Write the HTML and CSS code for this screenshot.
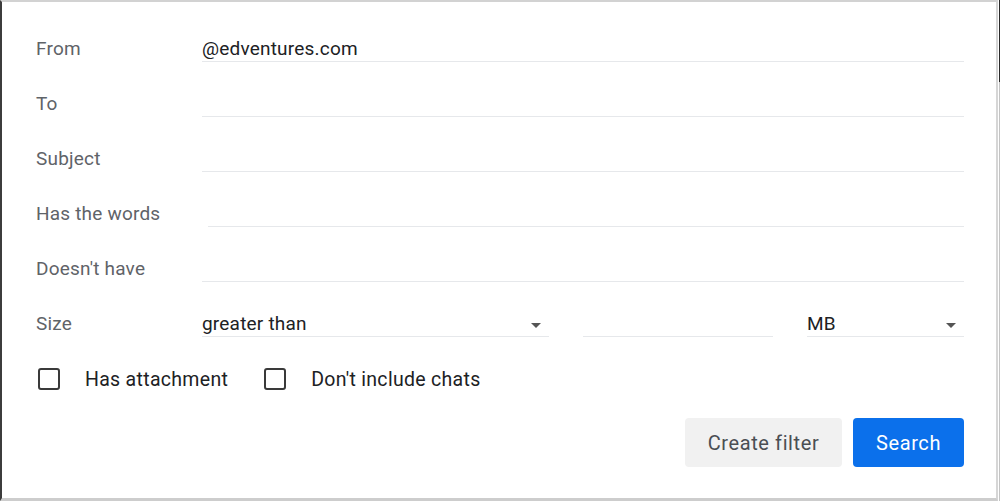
FILE: index.html
```html
<!DOCTYPE html>
<html lang="en">
<head>
<meta charset="utf-8">
<title>Search filter</title>
<link rel="stylesheet" href="styles.css">
</head>
<body>
<div class="page">
  <div class="dialog">
    <div class="row">
      <label class="label">From</label>
      <div class="field">@edventures.com</div>
    </div>
    <div class="row">
      <label class="label">To</label>
      <div class="field"></div>
    </div>
    <div class="row">
      <label class="label">Subject</label>
      <div class="field"></div>
    </div>
    <div class="row">
      <label class="label">Has the words</label>
      <div class="field field-shift"></div>
    </div>
    <div class="row">
      <label class="label">Doesn't have</label>
      <div class="field"></div>
    </div>
    <div class="row">
      <label class="label">Size</label>
      <div class="size-group">
        <div class="field select">greater than<span class="caret"></span></div>
        <div class="field"></div>
        <div class="field select">MB<span class="caret"></span></div>
      </div>
    </div>
    <div class="checks">
      <div class="check"><span class="box"></span><span class="check-text">Has attachment</span></div>
      <div class="check"><span class="box"></span><span class="check-text">Don't include chats</span></div>
    </div>
    <div class="actions">
      <button class="btn btn-secondary">Create filter</button>
      <button class="btn btn-primary">Search</button>
    </div>
  </div>
  <div class="edge"></div>
</div>
</body>
</html>
```

FILE: styles.css
```css
html, body {
  margin: 0;
  padding: 0;
  background: #ffffff;
}

.page {
  display: flex;
  width: 1000px;
  height: 501px;
}

.dialog {
  width: 998px;
  height: 501px;
  box-sizing: border-box;
  border-top: 2px solid #d2d2d2;
  border-left: 2px solid #3c3c3c;
  border-right: 2px solid #d6d6d6;
  border-bottom: 3px solid #cdcdcd;
  padding: 5px 32px 0 34px;
  font-family: Roboto, "Liberation Sans", Arial, sans-serif;
  font-size: 19px;
  letter-spacing: 0.2px;
  background: #ffffff;
}

.edge {
  width: 2px;
  height: 501px;
  background:
    linear-gradient(to right, #ffffff 1px, transparent 1px),
    linear-gradient(to bottom, #2a2a2a 82px, #c4c4c4 82px);
}

.row {
  display: grid;
  grid-template-columns: 166px 1fr;
  align-items: end;
  height: 55px;
}

.label {
  color: #5f6368;
  line-height: 24px;
  height: 25px;
}

.field {
  color: #202124;
  line-height: 24px;
  height: 24px;
  border-bottom: 1px solid #e6e8eb;
  position: relative;
}

.field-shift {
  margin-left: 6px;
}

.size-group {
  display: grid;
  grid-template-columns: 347px 190px 1fr;
  column-gap: 34px;
}

.caret {
  position: absolute;
  right: 8px;
  top: 11px;
  width: 0;
  height: 0;
  border-left: 5px solid transparent;
  border-right: 5px solid transparent;
  border-top: 5px solid #555555;
}

.checks {
  display: flex;
  align-items: center;
  gap: 36px;
  margin-top: 31px;
  padding-left: 2px;
  height: 22px;
}

.check {
  display: flex;
  align-items: center;
  gap: 25px;
}

.box {
  width: 22px;
  height: 22px;
  box-sizing: border-box;
  border: 2px solid #3a3a3a;
  border-radius: 3px;
}

.check-text {
  color: #202124;
  font-size: 19.5px;
  letter-spacing: 0.3px;
  line-height: 22px;
  padding-top: 2px;
}

.actions {
  display: flex;
  justify-content: flex-end;
  gap: 11px;
  margin-top: 28px;
}

.btn {
  height: 49px;
  border: none;
  border-radius: 4px;
  font-family: Roboto, "Liberation Sans", Arial, sans-serif;
  font-size: 20px;
  letter-spacing: 0.6px;
  padding: 0;
  cursor: pointer;
}

.btn-secondary {
  width: 157px;
  background: #f1f1f1;
  color: #4a4e53;
}

.btn-primary {
  width: 111px;
  background: #0b70eb;
  color: #ffffff;
}
```
